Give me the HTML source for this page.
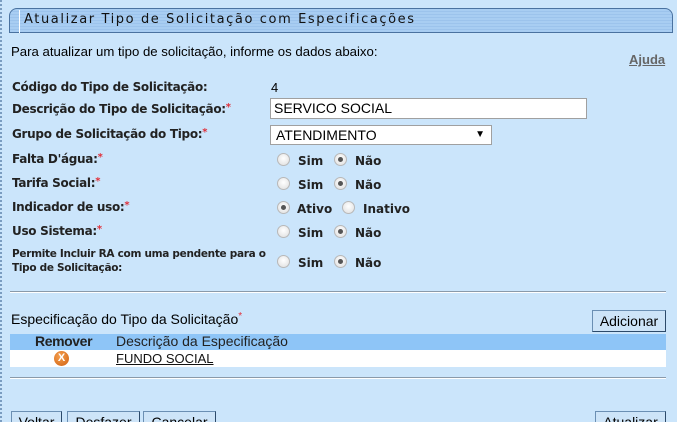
<!DOCTYPE html>
<html><head><meta charset="utf-8"><style>
*{margin:0;padding:0;box-sizing:border-box}
html,body{width:677px;height:422px;overflow:hidden}
body{background:#cbe5fb;font-family:"Liberation Sans",Arial,sans-serif;font-size:13px;color:#000;position:relative}
.a{position:absolute;white-space:nowrap}
.lbl{font-family:"DejaVu Sans",Verdana,sans-serif;font-size:12px;font-weight:bold;color:#222;letter-spacing:-0.3px}
.req{color:#e0303a;font-size:10px;vertical-align:top}
.r{position:absolute;width:13px;height:13px;border-radius:50%;border:1px solid #b8b8b8;background:radial-gradient(circle at 50% 40%,#fff,#ddd)}
.r.on::after{content:"";position:absolute;left:3px;top:3px;width:5px;height:5px;border-radius:50%;background:#555}
.rt{font-family:"DejaVu Sans",Verdana,sans-serif;font-size:12px;font-weight:bold;color:#222}
.btn{position:absolute;background:#cde4f8;border:1px solid #6b8fb3;border-bottom-color:#2c4a6a;border-right-color:#2c4a6a;font-size:14px;height:22px;line-height:20px;text-align:center}
</style></head><body>
<div class="a" style="left:0;top:0;width:3px;height:422px;border-left:2px dotted #7a9cc0"></div>
<div class="a" style="left:9px;top:8px;width:664px;height:25px;border:1px solid #4a72a0;border-radius:8px 8px 0 0;background:repeating-linear-gradient(#a8cdf2 0 2px,#9cc3ec 2px 3px);"></div>
<div class="a" style="left:19px;top:10px;width:1px;height:23px;background:#fff"></div>
<div class="a" style="left:24px;top:12px;font-family:'DejaVu Sans',Verdana,sans-serif;font-size:13px;letter-spacing:1.6px;color:#111">Atualizar Tipo de Solicitação com Especificações</div>
<div class="a" style="left:11px;top:44px;font-size:13.2px">Para atualizar um tipo de solicitação, informe os dados abaixo:</div>
<div class="a" style="left:629px;top:52px;font-weight:bold;color:#666;text-decoration:underline">Ajuda</div>

<div class="a lbl" style="left:12px;top:80px">Código do Tipo de Solicitação:</div>
<div class="a" style="left:271px;top:80px">4</div>
<div class="a lbl" style="left:12px;top:102px">Descrição do Tipo de Solicitação:<span class="req">*</span></div>
<div class="a" style="left:270px;top:98px;width:317px;height:21px;background:#fff;border:1px solid #a0a0a0;padding-left:3px;line-height:19px;font-size:14px">SERVICO SOCIAL</div>
<div class="a lbl" style="left:12px;top:127px">Grupo de Solicitação do Tipo:<span class="req">*</span></div>
<div class="a" style="left:270px;top:125px;width:222px;height:20px;background:#fff;border:1px solid #a0a0a0;padding-left:5px;line-height:18px;font-size:14px">ATENDIMENTO<span style="position:absolute;right:6px;font-size:10px">▼</span></div>

<div class="a lbl" style="left:12px;top:152px">Falta D'água:<span class="req">*</span></div>
<div class="r" style="left:277px;top:153px"></div><div class="a rt" style="left:298px;top:154px">Sim</div>
<div class="r on" style="left:334px;top:153px"></div><div class="a rt" style="left:355px;top:154px">Não</div>
<div class="a lbl" style="left:12px;top:176px">Tarifa Social:<span class="req">*</span></div>
<div class="r" style="left:277px;top:177px"></div><div class="a rt" style="left:298px;top:178px">Sim</div>
<div class="r on" style="left:334px;top:177px"></div><div class="a rt" style="left:355px;top:178px">Não</div>
<div class="a lbl" style="left:12px;top:200px">Indicador de uso:<span class="req">*</span></div>
<div class="r on" style="left:277px;top:201px"></div><div class="a rt" style="left:297px;top:202px">Ativo</div>
<div class="r" style="left:342px;top:201px"></div><div class="a rt" style="left:363px;top:202px">Inativo</div>
<div class="a lbl" style="left:12px;top:224px">Uso Sistema:<span class="req">*</span></div>
<div class="r" style="left:277px;top:225px"></div><div class="a rt" style="left:298px;top:226px">Sim</div>
<div class="r on" style="left:334px;top:225px"></div><div class="a rt" style="left:355px;top:226px">Não</div>
<div class="a lbl" style="left:12px;top:247px;font-size:10.5px;line-height:14px">Permite Incluir RA com uma pendente para o<br>Tipo de Solicitação:</div>
<div class="r" style="left:277px;top:255px"></div><div class="a rt" style="left:298px;top:256px">Sim</div>
<div class="r on" style="left:334px;top:255px"></div><div class="a rt" style="left:355px;top:256px">Não</div>

<div class="a" style="left:10px;top:291px;width:656px;height:2px;border-top:1px solid #8a9aaa;border-bottom:1px solid #fff"></div>
<div class="a" style="left:11px;top:311px;font-size:14px">Especificação do Tipo da Solicitação<span class="req">*</span></div>
<div class="btn" style="left:592px;top:310px;width:74px">Adicionar</div>
<div class="a" style="left:10px;top:334px;width:656px;height:16px;background:#8ec5f7"></div>
<div class="a" style="left:35px;top:333px;font-size:14px;color:#222;font-weight:bold;letter-spacing:-0.4px">Remover</div>
<div class="a" style="left:116px;top:333px;font-size:14px;color:#222">Descrição da Especificação</div>
<div class="a" style="left:10px;top:350px;width:656px;height:17px;background:#fff"></div>
<div class="a" style="left:54px;top:351px;width:15px;height:15px;border-radius:50%;background:radial-gradient(circle at 40% 35%,#f5a050,#d06010);color:#fff;font-size:11px;font-weight:bold;text-align:center;line-height:15px">X</div>
<div class="a" style="left:116px;top:351px;text-decoration:underline;color:#111">FUNDO SOCIAL</div>
<div class="a" style="left:10px;top:377px;width:656px;height:2px;border-top:1px solid #8a9aaa;border-bottom:1px solid #fff"></div>

<div class="btn" style="left:11px;top:411px;width:51px">Voltar</div>
<div class="btn" style="left:67px;top:411px;width:73px">Desfazer</div>
<div class="btn" style="left:143px;top:411px;width:73px">Cancelar</div>
<div class="btn" style="left:595px;top:411px;width:71px">Atualizar</div>
</body></html>
